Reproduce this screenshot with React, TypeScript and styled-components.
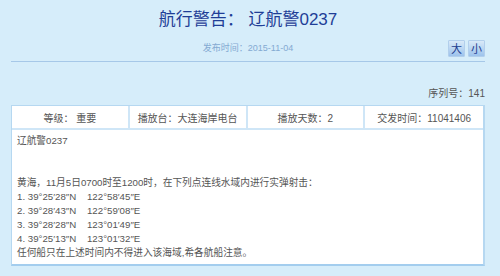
import React from "react";
import styled, { createGlobalStyle } from "styled-components";

const Global = createGlobalStyle`
  html, body { margin: 0; padding: 0; background: #d6edfa; }
  body { font-family: "Liberation Sans", "Noto Sans CJK SC", sans-serif; }
`;

const Page = styled.div`
  width: 474px;
  padding: 8px 15px 14px 11px;
  background: #d6edfa;
`;

const Title = styled.h1`
  margin: 0;
  text-align: center;
  font-size: 17px;
  line-height: 24px;
  font-weight: normal;
  color: #1f3e97;
`;

const MetaRow = styled.div`
  display: grid;
  grid-template-columns: 1fr auto 1fr;
  align-items: center;
  padding: 8px 0 4px;
  border-bottom: 1px solid #a6c8e8;
`;

const DateText = styled.div`
  grid-column: 2;
  font-size: 9px;
  line-height: 17px;
  color: #84aad2;
`;

const SizeButtons = styled.div`
  grid-column: 3;
  justify-self: end;
  display: flex;
  gap: 3px;
`;

const SizeButton = styled.button`
  width: 17px;
  height: 17px;
  padding: 0;
  border: 1px solid #b2cfec;
  border-radius: 1px;
  background: linear-gradient(#d9e9f8, #9dc3ec);
  color: #1d3d8f;
  font-family: "Noto Sans CJK SC", sans-serif;
  font-size: 11px;
  line-height: 15px;
  cursor: pointer;
`;

const Serial = styled.div`
  margin-top: 25px;
  margin-bottom: 4px;
  text-align: right;
  font-size: 10px;
  line-height: 14px;
  color: #555;
`;

const Table = styled.div`
  background: #fff;
  border: 1px solid #b6d8f1;
  border-right-width: 2px;
  border-bottom: 2px solid #a3cdee;
`;

const HeaderRow = styled.div`
  display: grid;
  grid-template-columns: repeat(4, 1fr);
  border-bottom: 2px solid #cfe6f7;
`;

const HeaderCell = styled.div`
  height: 22px;
  display: flex;
  align-items: center;
  justify-content: center;
  font-size: 10px;
  color: #555;
  border-right: 2px solid #cfe6f7;
  &:last-child { border-right: none; }
`;

const Body = styled.div`
  padding: 4px 5px 4px;
  font-size: 9.7px;
  line-height: 14px;
  color: #555;
`;

const Line = styled.div`
  min-height: 14px;
  white-space: pre;
`;

const header = ["等级： 重要", "播放台：大连海岸电台", "播放天数：2", "交发时间：11041406"];
const lines = [
  "辽航警0237",
  "",
  "",
  "黄海，11月5日0700时至1200时，在下列点连线水域内进行实弹射击：",
  "1. 39°25′28″N    122°58′45″E",
  "2. 39°28′43″N    122°59′08″E",
  "3. 39°28′28″N    123°01′49″E",
  "4. 39°25′13″N    123°01′32″E",
  "任何船只在上述时间内不得进入该海域,希各航船注意。",
];

export default function App() {
  return (
    <>
      <Global />
      <Page>
        <Title>航行警告： 辽航警0237</Title>
        <MetaRow>
          <DateText>发布时间：2015-11-04</DateText>
          <SizeButtons>
            <SizeButton>大</SizeButton>
            <SizeButton>小</SizeButton>
          </SizeButtons>
        </MetaRow>
        <Serial>序列号：141</Serial>
        <Table>
          <HeaderRow>
            {header.map((h) => (
              <HeaderCell key={h}>{h}</HeaderCell>
            ))}
          </HeaderRow>
          <Body>
            {lines.map((l, i) => (
              <Line key={i}>{l}</Line>
            ))}
          </Body>
        </Table>
      </Page>
    </>
  );
}
